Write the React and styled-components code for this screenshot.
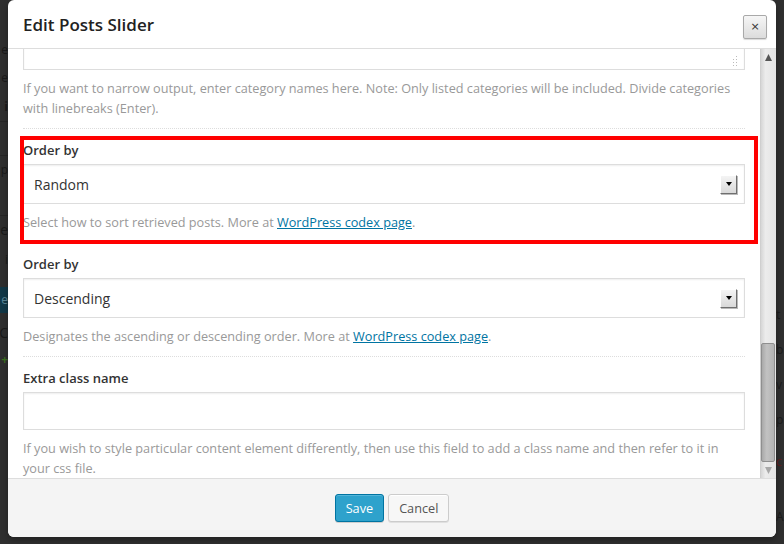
import React from 'react';
import styled, { createGlobalStyle, css } from 'styled-components';

const GlobalStyle = createGlobalStyle`
  html, body { margin: 0; padding: 0; background: #2f2f2f; }
  body { font-family: "Open Sans", "Noto Sans", sans-serif; }
  * { box-sizing: border-box; }
`;

const Stage = styled.div`
  width: 784px;
  height: 544px;
  overflow: hidden;
  background: #2f2f2f;
  display: flex;
  align-items: flex-start;
`;

const Peek = styled.div`
  width: 8px;
  height: 544px;
  flex: none;
  overflow: hidden;
  display: flex;
  flex-direction: column;
  padding-top: ${(p) => p.$top}px;
`;

const PeekRow = styled.div`
  height: ${(p) => p.$h || 30}px;
  flex: none;
  display: flex;
  align-items: center;
  justify-content: ${(p) => (p.$side === 'left' ? 'flex-end' : 'flex-start')};
  white-space: nowrap;
  font-size: ${(p) => p.$size || 12}px;
  font-weight: ${(p) => (p.$bold ? 700 : 400)};
  color: ${(p) => p.$color || '#1a1a1a'};
  background: ${(p) => p.$bg || 'transparent'};
  border-bottom: 1px solid ${(p) => p.$line || 'transparent'};
`;

const Modal = styled.div`
  width: 768px;
  height: 537px;
  flex: none;
  background: #fff;
  border-radius: 6px;
  overflow: hidden;
  display: flex;
  flex-direction: column;
  box-shadow: 0 3px 6px rgba(0, 0, 0, 0.3);
`;

const Header = styled.div`
  height: 49px;
  flex: none;
  border-bottom: 1px solid #dddddd;
  display: flex;
  justify-content: space-between;
  align-items: flex-start;
  padding: 0 9px 0 15px;
`;

const Title = styled.h1`
  margin: 0;
  font-size: 17px;
  font-weight: 600;
  color: #222;
  line-height: 50px;
`;

const CloseButton = styled.button`
  margin-top: 15px;
  width: 24px;
  height: 24px;
  padding: 0;
  border: 1px solid #a9a9a9;
  border-radius: 2px;
  background: linear-gradient(#f6f6f6, #dcdcdc);
  box-shadow: 0 1px 1px rgba(0, 0, 0, 0.15);
  font-family: "DejaVu Sans", sans-serif;
  font-size: 11px;
  line-height: 20px;
  color: #333;
  display: flex;
  align-items: center;
  justify-content: center;
`;

const Body = styled.div`
  flex: 1;
  min-height: 0;
  display: flex;
`;

const Scroll = styled.div`
  flex: 1;
  min-width: 0;
  overflow: hidden;
  padding: 0 15px;
`;

const ScrollContent = styled.div`
  margin-top: -51px;
`;

const Field = styled.div`
  position: relative;
  padding: 11px 0 10px;
  border-bottom: 1px dotted #dddddd;
  ${(p) =>
    p.$highlight &&
    css`
      &::after {
        content: '';
        position: absolute;
        top: 7px;
        left: -3px;
        right: -13px;
        bottom: -2px;
        border: 4px solid #ff0000;
        pointer-events: none;
      }
    `}
`;

const Label = styled.div`
  font-size: 13px;
  font-weight: 600;
  color: #333;
  line-height: 20px;
  margin-bottom: 4px;
`;

const boxBase = css`
  border: 1px solid #dddddd;
  background: #fff;
  box-shadow: inset 0 1px 2px rgba(0, 0, 0, 0.07);
`;

const TextArea = styled.div`
  ${boxBase};
  height: 61px;
  display: flex;
  align-items: flex-end;
  justify-content: flex-end;
  padding: 0 6px 3px 0;
`;

const SelectBox = styled.div`
  ${boxBase};
  height: 40px;
  display: flex;
  align-items: center;
  justify-content: space-between;
  padding: 0 7px 0 10px;
  font-size: 14px;
  color: #333;
`;

const ArrowButton = styled.span`
  width: 17px;
  height: 19px;
  display: flex;
  align-items: center;
  justify-content: center;
  background: linear-gradient(#f4f4f4, #d9d9d9);
  border: 1px solid;
  border-color: #ffffff #6f6f6f #6f6f6f #ffffff;
  box-shadow: 1px 1px 0 #b9b9b9;
`;

const TextInput = styled.div`
  ${boxBase};
  height: 38px;
`;

const Help = styled.p`
  margin: 8px 0 0;
  font-size: 12.7px;
  line-height: 20px;
  color: #999999;
`;

const Link = styled.a`
  color: #0074a2;
  text-decoration: underline;
`;

const ScrollBar = styled.div`
  width: 16px;
  flex: none;
  display: flex;
  flex-direction: column;
  background: linear-gradient(90deg, #d6d6d6, #ececec 30%, #e4e4e4);
  border-left: 1px solid #cfcfcf;
`;

const ScrollArrow = styled.div`
  height: 16px;
  flex: none;
  display: flex;
  align-items: center;
  justify-content: center;
`;

const Track = styled.div`
  flex: 1;
  display: flex;
  flex-direction: column;
  justify-content: flex-end;
`;

const Thumb = styled.div`
  height: 119px;
  margin: 0 1px 0 0;
  border: 1px solid #8f8f8f;
  border-radius: 2px;
  background: linear-gradient(90deg, #a9a9a9, #c2c2c2 40%, #b3b3b3);
`;

const Footer = styled.div`
  height: 59px;
  flex: none;
  border-top: 1px solid #dddddd;
  background: #f4f4f4;
  display: flex;
  justify-content: center;
  align-items: center;
  gap: 4px;
`;

const Button = styled.button`
  height: 28px;
  padding: 0 10px 1px;
  border-radius: 3px;
  font-family: inherit;
  font-size: 12.7px;
  line-height: 26px;
  cursor: pointer;
  ${(p) =>
    p.$primary
      ? css`
          background: #2ea2cc;
          border: 1px solid #0074a2;
          color: #fff;
          box-shadow: inset 0 1px 0 rgba(120, 200, 230, 0.5), 0 1px 0 rgba(0, 0, 0, 0.15);
        `
      : css`
          background: #f7f7f7;
          border: 1px solid #cccccc;
          color: #555;
          box-shadow: inset 0 1px 0 #fff, 0 1px 0 rgba(0, 0, 0, 0.08);
        `}
`;

const Tri = ({ dir = 'down', color = '#000', w = 7, h = 4 }) => (
  <svg width={w} height={h} viewBox={`0 0 ${w} ${h}`}>
    {dir === 'down' ? (
      <polygon points={`0,0 ${w},0 ${w / 2},${h}`} fill={color} />
    ) : (
      <polygon points={`0,${h} ${w},${h} ${w / 2},0`} fill={color} />
    )}
  </svg>
);

const Grip = () => (
  <svg width="7" height="11" viewBox="0 0 7 11">
    {[
      [5, 1], [5, 4], [2, 4], [5, 7], [2, 7], [5, 10], [2, 10], [-1, 10],
    ].map(([x, y], i) => (
      <rect key={i} x={x} y={y} width="1" height="1" fill="#bbb" />
    ))}
  </svg>
);

const Select = ({ value }) => (
  <SelectBox>
    <span>{value}</span>
    <ArrowButton>
      <Tri w={6} h={4} />
    </ArrowButton>
  </SelectBox>
);

export default function App() {
  return (
    <>
      <GlobalStyle />
      <Stage>
        <Peek $top={36}>
          <PeekRow $side="left" $h={28}>e</PeekRow>
          <PeekRow $side="left" $h={28}>e</PeekRow>
          <PeekRow $side="left" $h={30} $bold $line="#262626">i</PeekRow>
          <PeekRow $side="left" $h={34} $line="#262626" />
          <PeekRow $side="left" $h={28}>p</PeekRow>
          <PeekRow $side="left" $h={32} $line="#262626" />
          <PeekRow $side="left" $h={28} $size={14}>e</PeekRow>
          <PeekRow $side="left" $h={32}>i</PeekRow>
          <PeekRow $side="left" $h={11} />
          <PeekRow $side="left" $h={26} $bg="#123847" $color="#5a8697">e</PeekRow>
          <PeekRow $side="left" $h={40} $size={14}>C</PeekRow>
          <PeekRow $side="left" $h={14} $color="#3b6e1f" $bold>+</PeekRow>
        </Peek>
        <Modal>
          <Header>
            <Title>Edit Posts Slider</Title>
            <CloseButton aria-label="Close">×</CloseButton>
          </Header>
          <Body>
            <Scroll>
              <ScrollContent>
                <Field>
                  <TextArea>
                    <Grip />
                  </TextArea>
                  <Help>
                    If you want to narrow output, enter category names here. Note: Only listed categories will be
                    included. Divide categories with linebreaks (Enter).
                  </Help>
                </Field>
                <Field $highlight>
                  <Label>Order by</Label>
                  <Select value="Random" />
                  <Help>
                    Select how to sort retrieved posts. More at <Link href="#">WordPress codex page</Link>.
                  </Help>
                </Field>
                <Field>
                  <Label>Order by</Label>
                  <Select value="Descending" />
                  <Help>
                    Designates the ascending or descending order. More at <Link href="#">WordPress codex page</Link>.
                  </Help>
                </Field>
                <Field>
                  <Label>Extra class name</Label>
                  <TextInput />
                  <Help>
                    If you wish to style particular content element differently, then use this field to add a class
                    name and then refer to it in your css file.
                  </Help>
                </Field>
              </ScrollContent>
            </Scroll>
            <ScrollBar>
              <ScrollArrow>
                <Tri dir="up" color="#555" w={7} h={7} />
              </ScrollArrow>
              <Track>
                <Thumb />
              </Track>
              <ScrollArrow>
                <Tri dir="down" color="#a8a8a8" w={7} h={7} />
              </ScrollArrow>
            </ScrollBar>
          </Body>
          <Footer>
            <Button $primary>Save</Button>
            <Button>Cancel</Button>
          </Footer>
        </Modal>
        <Peek $top={297}>
          <PeekRow $side="right" $h={35}>t</PeekRow>
          <PeekRow $side="right" $h={35}>b</PeekRow>
          <PeekRow $side="right" $h={35}>v</PeekRow>
          <PeekRow $side="right" $h={35}>p</PeekRow>
          <PeekRow $side="right" $h={50} $color="#5a1a1a">c</PeekRow>
          <PeekRow $side="right" $h={60}>A</PeekRow>
        </Peek>
      </Stage>
    </>
  );
}
